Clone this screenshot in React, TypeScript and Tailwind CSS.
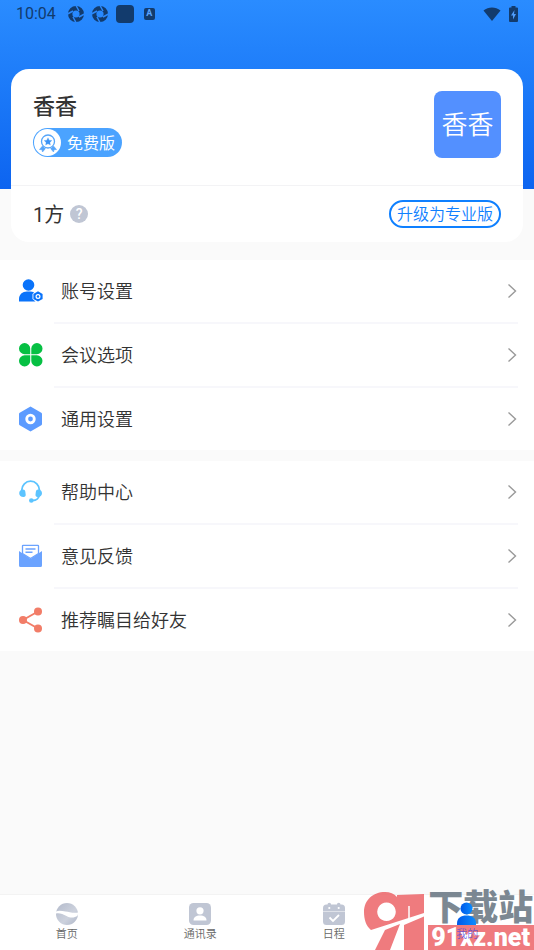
import type { ReactNode } from "react"

const AccountIcon = () => (
    <svg viewBox="0 0 24 24" className="size-6" fill="#0a73fa">
        <circle cx="9.5" cy="6" r="5.8" />
        <path d="M0 22.5V20c0-4.500 3.500-7.500 8-7.500h3c1.600 0 3 .400 4.200 1.100L13.500 15v5l3 2.500z" />
        <path d="M19 12.300l4.600 2.700v5L19 22.600 14.400 20v-5z" />
        <circle cx="19" cy="17.500" r="1.900" fill="none" stroke="#fff" strokeWidth="1.200" />
    </svg>
)

const CloverIcon = () => (
    <svg viewBox="0 0 24 24" className="size-6" fill="#06c043">
        <path d="M11.200 11.200H5.700A5.600 5.600 0 1 1 11.200 5.600z" />
        <path d="M12.300 11.200V5.600a5.600 5.600 0 1 1 5.500 5.600z" />
        <path d="M11.200 12.300V17.900A5.600 5.600 0 1 1 5.700 12.300z" />
        <path d="M12.300 12.300h5.500A5.600 5.600 0 1 1 12.300 17.900z" />
    </svg>
)

const GeneralIcon = () => (
    <svg viewBox="0 0 24 26" className="h-6.5 w-6" fill="#5c9bff">
        <path d="M11.500 .5l10.800 6.200q.7.400.7 1.200v10.200q0 .8-.7 1.200L11.500 25.500.7 19.300Q0 18.900 0 18.100V7.900Q0 7.100.7 6.700z" />
        <circle cx="11.500" cy="13" r="3.800" fill="none" stroke="#fff" strokeWidth="2.800" />
    </svg>
)

const HelpIcon = () => (
    <svg viewBox="0 0 24 24" className="size-6" fill="#5cc4ff">
        <path d="M2.800 11V10a8.800 8.800 0 0 1 17.600 0v4c0 4-3 6.500-7 6.500" fill="none" stroke="#5cc4ff" strokeWidth="1.800" />
        <path d="M3.500 9.500c1.500-.3 2.500.5 2.800 2l.4 3c.2 1.500-.6 2.500-2 2.600C2 17.200.2 15.500.2 13.200c0-2 1.400-3.400 3.300-3.700z" />
        <path d="M19.700 9.500c-1.500-.3-2.500.5-2.800 2l-.4 3c-.2 1.500.6 2.500 2 2.600 2.700.1 4.500-1.600 4.500-3.900 0-2-1.400-3.400-3.300-3.700z" />
        <circle cx="12.300" cy="20.500" r="2.300" />
    </svg>
)

const FeedbackIcon = () => (
    <svg viewBox="0 0 24 24" className="size-6" fill="#6ba3ff">
        <path d="M0 7l11.500 8L23 7v14.500q0 1.500-1.500 1.500h-20Q0 23 0 21.500z" />
        <path d="M3.500 2q0-.7.700-.7h14.600q.7 0 .7.700v7.500L11.500 14.500l-8-5z" fill="#fff" stroke="#6ba3ff" strokeWidth="1.300" />
        <path d="M6.500 5h10M6.500 8.300h7" fill="none" stroke="#6ba3ff" strokeWidth="1.400" />
    </svg>
)

const ShareIcon = () => (
    <svg viewBox="0 0 24 26" className="h-6.5 w-6" fill="#f27d68">
        <path d="M19 4.500L4 13l15 8.500" fill="none" stroke="#f27d68" strokeWidth="1.900" />
        <circle cx="4" cy="13" r="4" />
        <circle cx="19" cy="4.500" r="4" />
        <circle cx="19" cy="21.500" r="4" />
    </svg>
)

const HomeIcon = () => (
    <svg viewBox="0 0 24 24" className="size-6">
        <defs>
            <linearGradient id="globe" x1="0" y1="0" x2="1" y2="1">
                <stop offset="0" stopColor="#b3bacb" />
                <stop offset=".6" stopColor="#cdd2dd" />
                <stop offset="1" stopColor="#aeb6c8" />
            </linearGradient>
        </defs>
        <circle cx="12" cy="12" r="11" fill="url(#globe)" />
        <path d="M1 9.500c3-1.500 6-.5 9.500 0s8 2 12.500 1c.1 1 0 2-.3 3-3.500 2.800-7.500 2.500-11.200.5S4 10.500 1 11.500z" fill="#fff" />
    </svg>
)

const ContactsIcon = () => (
    <svg viewBox="0 0 24 24" className="size-6">
        <rect x="1" y="1" width="22" height="22" rx="4.500" fill="#c0c6d4" />
        <circle cx="12" cy="8.800" r="3.600" fill="#fff" />
        <path d="M5.500 18.500c0-3.500 2.500-5 6.500-5s6.500 1.500 6.500 5z" fill="#fff" />
    </svg>
)

const CalendarIcon = () => (
    <svg viewBox="0 0 24 24" className="size-6">
        <path d="M4.500 2.500h1a1.800 1.800 0 0 1 3.600 0h5.800a1.800 1.800 0 0 1 3.600 0h1Q23 2.500 23 6v2.900H1V6q0-3.500 3.500-3.500zM1 9.500h22v10q0 3.500-3.500 3.500h-15Q1 23 1 19.500z" fill="#c0c6d4" />
        <circle cx="7.300" cy="6" r="1.100" fill="#fff" />
        <circle cx="16.700" cy="6" r="1.100" fill="#fff" />
        <path d="M7.500 15.500l3.500 3.500 6-6" fill="none" stroke="#fff" strokeWidth="1.800" />
    </svg>
)

const MineIcon = () => (
    <svg viewBox="0 0 24 24" className="size-6">
        <defs>
            <linearGradient id="mine" x1="0" y1="0" x2="1" y2="0">
                <stop offset="0" stopColor="#0058e8" />
                <stop offset="1" stopColor="#0a8cff" />
            </linearGradient>
        </defs>
        <circle cx="11.500" cy="6.500" r="6" fill="url(#mine)" />
        <path d="M2 23v-1.500C2 16 6 13.500 11.500 13.500S21 16 21 21.500V23z" fill="url(#mine)" />
    </svg>
)

const ApertureIcon = () => (
    <svg viewBox="0 0 16 16" className="size-4 overflow-visible">
        <circle cx="8" cy="8" r="5.800" fill="none" stroke="#123b6d" strokeWidth="4.400" />
        <path d="M8-.500l3 5.500M16.500 8L11 11M8 16.500L5 11M-.500 8L5 5" stroke="#2a88fb" strokeWidth="1.500" />
    </svg>
)

const Chevron = () => (
    <svg viewBox="0 0 10 16" className="h-4 w-2.5" fill="none" stroke="#999" strokeWidth="1.400">
        <path d="M1.500 1.500L8.500 8l-7 6.500" />
    </svg>
)

const StatusBar = () => (
    <div className="flex h-7 items-center px-4 text-[#123b6d]">
        <span className="mr-3 font-[Roboto] text-base">10:04</span>
        <div className="flex items-center gap-2">
            <ApertureIcon />
            <ApertureIcon />
            <span className="size-4.5 rounded-sm bg-[#123b6d]" />
            <span className="ml-0.5 flex h-3 w-[11px] items-center justify-center rounded-xs bg-[#123b6d] font-[Roboto] text-[9px] font-bold text-[#5aa5ff]">A</span>
        </div>
        <div className="ml-auto flex items-center gap-2">
            <svg viewBox="0 0 18 14" className="h-3.5 w-4.5" fill="#123b6d">
                <path d="M9 14L.5 3.500C5.500-.6 12.500-.6 17.500 3.500z" />
            </svg>
            <svg viewBox="0 0 9 16" className="h-4 w-2.25" fill="#123b6d">
                <path d="M2.500 0h4v1.500H8q1 0 1 1V15q0 1-1 1H1q-1 0-1-1V2.500q0-1 1-1h1.500z" />
                <path d="M5.500 4L2 9.500h2V13.500L7 8H5z" fill="#4f9dfb" />
            </svg>
        </div>
    </div>
)

const ProfileCard = () => (
    <section className="mx-[11px] -mt-30 rounded-[18px] bg-white">
        <div className="flex justify-between border-b border-[#f3f3f5] px-[22px] pt-[22px] pb-[27px]">
            <div>
                <h1 className="pt-0.5 text-[22px] leading-7 font-medium">香香</h1>
                <div className="mt-[7px] flex h-[29px] items-center gap-1.5 rounded-full bg-[#4ba3ff] pr-[7px] pl-px text-base text-white">
                    <span className="flex size-[27px] items-center justify-center rounded-full bg-white">
                        <svg viewBox="0 0 20 20" className="size-5" fill="none" stroke="#55a5fa" strokeWidth="1.300">
                            <path d="M4.500 13L1.500 16.500l2.500.2.500 2.300 3-3.500M15.500 13l3 3.500-2.500.2-.5 2.300-3-3.500" fill="#55a5fa" strokeWidth=".6" />
                            <circle cx="10" cy="8.500" r="6.500" fill="#fff" />
                            <path d="M10 4.700l1.200 2.500 2.700.300-2 1.900.5 2.700L10 10.800l-2.400 1.300.5-2.700-2-1.900 2.700-.3z" fill="#3b93f5" strokeWidth=".3" />
                        </svg>
                    </span>
                    <span className="pt-0.5">免费版</span>
                </div>
            </div>
            <div className="flex size-[67px] items-center justify-center rounded-lg bg-[#5390ff] pt-0.5 text-[26px] font-[350] text-white">香香</div>
        </div>
        <div className="flex h-14 items-center px-[22px]">
            <span className="pt-0.5 text-xl">1方</span>
            <button aria-label="说明" className="ml-1.5 flex size-[18px] items-center justify-center rounded-full bg-[#c0c6d4] font-[Roboto] text-sm font-medium text-white">?</button>
            <button className="ml-auto flex h-7 items-center rounded-full border-2 border-[#0f80ff] px-1.5 pt-0.5 text-base font-[350] text-[#0f80ff]">升级为专业版</button>
        </div>
    </section>
)

const MenuItem = ({ icon, label }: { icon: ReactNode; label: string }) => (
    <li className="group">
        <a href="#" className="flex h-[62px] items-center pr-[17px] pl-[19px]">
            <span className="flex w-6 justify-center">{icon}</span>
            <span className="ml-[18px] pt-0.5 text-lg font-[350]">{label}</span>
            <span className="ml-auto">
                <Chevron />
            </span>
        </a>
        <div className="mr-4 ml-[54px] h-0.5 bg-[#f7f7fb] group-last:hidden" />
    </li>
)

const Tab = ({ icon, label, active }: { icon: ReactNode; label: string; active?: boolean }) => (
    <button className={`flex flex-col items-center pt-[7px] text-[11px] leading-[18px] font-[350] ${active ? "z-10 text-[#4a48dc]/75" : "text-[#666]"}`}>
        {icon}
        {label}
    </button>
)

const Watermark = () => (
    <div className="pointer-events-none absolute right-0 bottom-0 flex items-end opacity-85">
        <svg viewBox="0 0 65 59" className="h-[59px] w-[65px]" fill="#ed6468">
            <path
                fillRule="evenodd"
                d="M22 1C27 1 31 2.500 34 6V4L61 3V22L8 39C3 35 1 28 1 21 1 9 10 1 22 1zM23.500 11.500a9.300 9.300 0 1 0 .01 0z"
            />
            <path d="M61 25.500V59H41V34zM37 33L27 59H12L22 39z" />
            <path d="M46 15v14" stroke="#fff" strokeWidth="1.500" />
        </svg>
        <div className="flex flex-col">
            <span className="h-9 text-[35px] leading-10 font-black text-[#667480]">下载站</span>
            <span className="h-[25px] bg-[#ed6468] pr-1 pl-[3px] font-[Roboto] text-[25px] leading-[25px] font-black text-white">91xz.net</span>
        </div>
    </div>
)

const App = () => {
    return (
        <div className="flex min-h-screen flex-col bg-[#fafafa] font-[Roboto,'Noto_Sans_CJK_SC',sans-serif] text-[#333]">
            <header className="h-[189px] bg-linear-to-b from-[#2a8cff] to-[#0d64f0]">
                <StatusBar />
            </header>
            <main className="pb-6">
                <ProfileCard />
                <ul className="mt-[18px] bg-white">
                    <MenuItem icon={<AccountIcon />} label="账号设置" />
                    <MenuItem icon={<CloverIcon />} label="会议选项" />
                    <MenuItem icon={<GeneralIcon />} label="通用设置" />
                </ul>
                <ul className="mt-[11px] bg-white">
                    <MenuItem icon={<HelpIcon />} label="帮助中心" />
                    <MenuItem icon={<FeedbackIcon />} label="意见反馈" />
                    <MenuItem icon={<ShareIcon />} label="推荐瞩目给好友" />
                </ul>
            </main>
            <nav className="relative mt-auto grid h-14 grid-cols-4 border-t border-[#f3f3f3] bg-white">
                <Tab icon={<HomeIcon />} label="首页" />
                <Tab icon={<ContactsIcon />} label="通讯录" />
                <Tab icon={<CalendarIcon />} label="日程" />
                <Tab icon={<MineIcon />} label="我的" active />
                <Watermark />
            </nav>
        </div>
    )
}

export default App
